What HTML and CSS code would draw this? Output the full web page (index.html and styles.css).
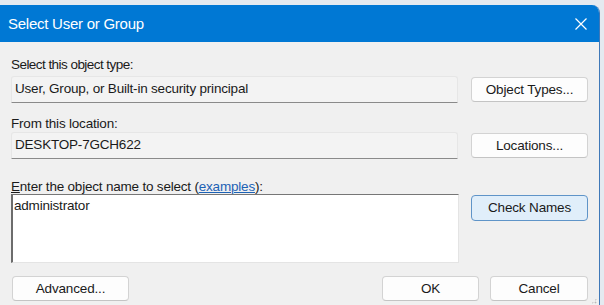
FILE: index.html
```html
<!DOCTYPE html>
<html lang="en">
<head>
<meta charset="utf-8">
<title>Select User or Group</title>
<link rel="stylesheet" href="styles.css">
</head>
<body>
<div class="window">
  <div class="titlebar">
    <span class="title">Select User or Group</span>
    <span class="close" aria-label="Close">
      <svg width="12" height="12" viewBox="0 0 12 12"><path d="M0.5 0.5 L11.5 11.5 M11.5 0.5 L0.5 11.5" stroke="#ffffff" stroke-width="1.2" fill="none"/></svg>
    </span>
  </div>
  <div class="content">
    <div class="label l1">Select this object type:</div>
    <div class="row r1">
      <div class="field">User, Group, or Built-in security principal</div>
      <button class="btn">Object Types...</button>
    </div>
    <div class="label l2">From this location:</div>
    <div class="row r2">
      <div class="field">DESKTOP-7GCH622</div>
      <button class="btn">Locations...</button>
    </div>
    <div class="label l3"><u>E</u>nter the object name to select (<a class="link" href="#">examples</a>):</div>
    <div class="row r3">
      <div class="textarea">administrator</div>
      <button class="btn btn-default">Check Names</button>
    </div>
    <div class="bottom">
      <button class="btn btn-adv">Advanced...</button>
      <div class="spacer"></div>
      <button class="btn btn-ok">OK</button>
      <button class="btn btn-cancel">Cancel</button>
    </div>
  </div>
  <div class="grip"></div>
</div>
</body>
</html>
```
FILE: styles.css
```css
html, body {
  margin: 0;
  padding: 0;
}
body {
  width: 604px;
  height: 305px;
  overflow: hidden;
  background: #e4eaf0;
  font-family: "Liberation Sans", Arial, sans-serif;
  font-size: 13.5px;
  color: #1a1a1a;
}
.window {
  position: relative;
  margin-top: 5px;
  width: 599px;
  height: 300px;
  background: #f0f0f0;
  border-right: 1px solid #3f78b8;
  border-top-right-radius: 8px;
  overflow: hidden;
}
.titlebar {
  height: 37px;
  background: #0078d4;
  display: flex;
  align-items: center;
  justify-content: space-between;
  padding: 0 12px 0 8px;
}
.title {
  color: #ffffff;
  font-size: 15px;
  letter-spacing: -0.25px;
}
.close {
  display: flex;
  width: 12px;
  height: 12px;
  margin-top: 1px;
}
.content {
  padding: 15px 11px 0 11px;
  display: flex;
  flex-direction: column;
}
.label {
  height: 15px;
  line-height: 15px;
  letter-spacing: -0.2px;
  white-space: nowrap;
}
.l1 { letter-spacing: -0.55px; }
.l2 { margin-top: 13px; }
.l3 { margin-top: 20px; }
.link {
  color: #1d62b5;
  text-decoration: underline;
}
.row {
  display: flex;
  align-items: flex-start;
  gap: 13px;
}
.r1 { margin-top: 4px; }
.r2 { margin-top: 1px; }
.field {
  box-sizing: border-box;
  width: 447px;
  height: 27px;
  background: #f3f3f3;
  border: 1px solid #e6e6e6;
  border-bottom: 1px solid #8a8a8a;
  border-radius: 3px 3px 0 0;
  padding: 0 0 0 3px;
  line-height: 24px;
  letter-spacing: -0.2px;
  white-space: nowrap;
}
.btn {
  box-sizing: border-box;
  width: 117px;
  height: 25px;
  margin-top: 1px;
  background: #fdfdfd;
  border: 1px solid #d3d3d3;
  border-bottom-color: #c4c4c4;
  border-radius: 4px;
  font-family: "Liberation Sans", Arial, sans-serif;
  font-size: 13.5px;
  letter-spacing: -0.15px;
  color: #1a1a1a;
  padding: 0;
  line-height: 22px;
}
.textarea {
  box-sizing: border-box;
  width: 448px;
  height: 69px;
  background: #ffffff;
  border-top: 1px solid #767676;
  border-left: 2px solid #6c6c6c;
  border-right: 1px solid #e4e4e4;
  border-bottom: 1px solid #e4e4e4;
  padding: 3px 0 0 1px;
  line-height: 15px;
  letter-spacing: -0.2px;
}
.r3 { gap: 12px; }
.btn-default {
  background: #e0eefa;
  border: 1px solid #5f94c8;
  height: 26px;
  margin-top: 1px;
}
.bottom {
  display: flex;
  margin-top: 12px;
}
.btn-adv { margin-left: 1px; width: 117px; }
.spacer { flex: 1; }
.btn-ok { width: 97px; }
.btn-cancel { width: 98px; margin-left: 11px; }
.grip {
  position: absolute;
  right: 2px;
  bottom: 1px;
  width: 6px;
  height: 6px;
  background:
    radial-gradient(circle, #b8b8b8 0.8px, transparent 1.1px) 0 0 / 3px 3px;
  clip-path: polygon(100% 0, 100% 100%, 0 100%);
}
```
